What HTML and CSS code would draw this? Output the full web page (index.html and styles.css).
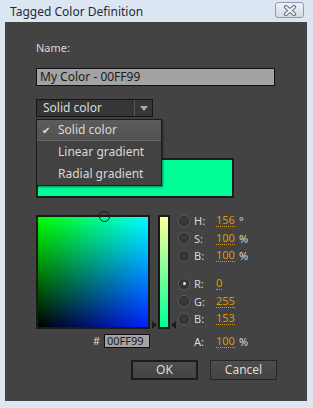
FILE: index.html
```html
<!DOCTYPE html>
<html lang="en">
<head>
    <meta charset="UTF-8">
    <title>Tagged Color Definition</title>
    <link rel="stylesheet" href="styles.css">
</head>
<body>
<div class="titlebar">
    <span class="title">Tagged Color Definition</span>
    <span class="close">
        <svg width="14" height="11" viewBox="0 0 14 11">
            <path d="M3 2 L11 9 M11 2 L3 9" stroke="#6b7380" stroke-width="4.2" stroke-linecap="round"/>
            <path d="M3 2 L11 9 M11 2 L3 9" stroke="#f4f6f8" stroke-width="2" stroke-linecap="round"/>
        </svg>
    </span>
</div>
<div class="dialog">
    <div class="label">Name:</div>
    <div class="nameInput">My Color - 00FF99</div>

    <div class="typeBox">
        <div class="select">
            <span class="selectText">Solid color</span>
            <span class="selectArrow"></span>
        </div>
        <div class="menu">
            <div class="menuItem active"><span class="check">&#10004;</span>Solid color</div>
            <div class="menuItem">Linear gradient</div>
            <div class="menuItem">Radial gradient</div>
        </div>
    </div>

    <div class="swatch"></div>

    <div class="picker">
        <div class="fieldCol">
            <div class="field">
                <span class="marker"></span>
            </div>
            <div class="hexRow">
                <span class="hash">#</span>
                <span class="hexInput">00FF99</span>
            </div>
        </div>
        <div class="sliderCol">
            <span class="tri left"></span>
            <div class="slider"></div>
            <span class="tri right"></span>
        </div>
        <div class="values">
            <div class="row"><span class="radio"></span><span class="name">H:</span><span class="val">156</span><span class="unit">&deg;</span></div>
            <div class="row"><span class="radio"></span><span class="name">S:</span><span class="val">100</span><span class="unit">%</span></div>
            <div class="row"><span class="radio"></span><span class="name">B:</span><span class="val">100</span><span class="unit">%</span></div>
            <div class="row gap"><span class="radio on"></span><span class="name">R:</span><span class="val">0</span></div>
            <div class="row"><span class="radio"></span><span class="name">G:</span><span class="val">255</span></div>
            <div class="row"><span class="radio"></span><span class="name">B:</span><span class="val">153</span></div>
            <div class="row alpha"><span class="noradio"></span><span class="name">A:</span><span class="val">100</span><span class="unit">%</span></div>
        </div>
    </div>

    <div class="buttons">
        <button class="btn default">OK</button>
        <button class="btn">Cancel</button>
    </div>
</div>
</body>
</html>
```

FILE: styles.css
```css
body {
    margin: 0;
    background: #dbe6f2;
    font-family: "Noto Sans", "DejaVu Sans", sans-serif;
    font-size: 12px;
}
.titlebar {
    height: 22px;
    display: flex;
    align-items: center;
    justify-content: space-between;
}
.title {
    padding-left: 10px;
    color: #1e2a38;
    font-size: 12px;
}
.close {
    width: 27px;
    height: 14px;
    margin-right: 9px;
    margin-top: -2px;
    border: 1px solid #8e9bb0;
    border-radius: 3px;
    background: linear-gradient(#eef3f9, #d2dbe7);
    display: flex;
    align-items: center;
    justify-content: center;
}
.dialog {
    margin-left: 5px;
    width: 302px;
    height: 379px;
    background: #434343;
    padding-left: 31px;
    box-sizing: border-box;
    color: #d8d8d8;
}
.label {
    padding-top: 18px;
    font-size: 11px;
    height: 14px;
}
.nameInput {
    margin-top: 14px;
    width: 239px;
    height: 18px;
    box-sizing: border-box;
    background: #a3a3a3;
    border: 1px solid #111;
    color: #1a1a1a;
    font-size: 12px;
    line-height: 16px;
    padding-left: 3px;
}
.typeBox {
    position: relative;
    margin-top: 13px;
    height: 18px;
}
.select {
    width: 117px;
    height: 18px;
    box-sizing: border-box;
    background: #363636;
    border: 1px solid #151515;
    display: flex;
}
.selectText {
    flex: 1;
    padding-left: 6px;
    line-height: 16px;
    color: #dcdcdc;
}
.selectArrow {
    width: 17px;
    border-left: 1px solid #555;
    position: relative;
}
.selectArrow::after {
    content: "";
    position: absolute;
    left: 5px;
    top: 6px;
    border-left: 4px solid transparent;
    border-right: 4px solid transparent;
    border-top: 5px solid #aaa;
}
.menu {
    position: absolute;
    left: 0;
    top: 20px;
    width: 126px;
    height: 67px;
    box-sizing: border-box;
    background: #424242;
    border: 1px solid #1c1c1c;
    box-shadow: 1px 1px 2px rgba(0, 0, 0, 0.5);
    z-index: 2;
}
.menuItem {
    height: 22px;
    line-height: 21px;
    padding-left: 21px;
    color: #d8d8d8;
    font-size: 12px;
    position: relative;
}
.menuItem.active {
    background: linear-gradient(#5c5c5c, #525252);
    border-bottom: 1px solid #666;
    height: 20px;
    line-height: 20px;
}
.check {
    position: absolute;
    left: 5px;
    font-size: 10px;
    color: #e0e0e0;
}
.swatch {
    margin-top: 41px;
    width: 198px;
    height: 40px;
    box-sizing: border-box;
    background: #00ff99;
    border: 2px solid #1c1c1c;
}
.picker {
    display: flex;
    margin-top: 17px;
}
.fieldCol {
    width: 114px;
}
.field {
    position: relative;
    width: 114px;
    height: 114px;
    box-sizing: border-box;
    border: 2px solid #1a1a1a;
    background: linear-gradient(to right, #000, #0020ff), linear-gradient(to top, #000, #00ff00);
    background-blend-mode: screen;
}
.marker {
    position: absolute;
    left: 61px;
    top: -6px;
    width: 9px;
    height: 9px;
    border: 1px solid #1c1c1c;
    border-radius: 50%;
}
.hexRow {
    display: flex;
    justify-content: flex-end;
    align-items: center;
    margin-top: 4px;
}
.hash {
    margin-right: 4px;
    font-size: 11px;
}
.hexInput {
    width: 46px;
    height: 14px;
    box-sizing: border-box;
    background: #a3a3a3;
    border: 1px solid #111;
    color: #1a1a1a;
    font-size: 11px;
    line-height: 12px;
    padding-left: 2px;
}
.sliderCol {
    position: relative;
    margin-left: 8px;
    width: 12px;
    height: 114px;
}
.slider {
    width: 12px;
    height: 114px;
    box-sizing: border-box;
    border: 2px solid #1a1a1a;
    background: linear-gradient(#ffff99, #00ff99);
}
.tri {
    position: absolute;
    bottom: 0;
    border-top: 4px solid transparent;
    border-bottom: 4px solid transparent;
}
.tri.left {
    left: -6px;
    border-left: 5px solid #1a1a1a;
}
.tri.right {
    right: -6px;
    border-right: 5px solid #1a1a1a;
}
.values {
    margin-left: 8px;
    margin-top: -3px;
}
.row {
    display: flex;
    align-items: center;
    height: 17.5px;
}
.row.gap {
    margin-top: 10.5px;
}
.row.alpha {
    margin-top: 5.5px;
}
.radio, .noradio {
    width: 12px;
    height: 12px;
    box-sizing: border-box;
    border-radius: 50%;
    margin-right: 4px;
    position: relative;
}
.radio {
    background: radial-gradient(circle at 50% 45%, #3c3c3c, #303030);
    border: 1px solid #5a5a5a;
    box-shadow: inset 0 0 0 1px #2a2a2a;
}
.radio.on::after {
    content: "";
    position: absolute;
    left: 3.5px;
    top: 3.5px;
    width: 3px;
    height: 3px;
    border-radius: 50%;
    background: #eee;
}
.name {
    width: 22px;
    font-size: 11px;
}
.val {
    color: #d89a08;
    font-size: 11px;
    border-bottom: 1px dotted #d89a08;
    line-height: 12px;
}
.unit {
    margin-left: 4px;
    font-size: 11px;
}
.buttons {
    display: flex;
    gap: 12px;
    margin-top: 9px;
    margin-left: 95px;
}
.btn {
    width: 67px;
    height: 20px;
    box-sizing: border-box;
    background: linear-gradient(#4d4d4d, #434343);
    border: 1px solid #262626;
    color: #dcdcdc;
    font-family: "Noto Sans", "DejaVu Sans", sans-serif;
    font-size: 12px;
    padding: 0;
    line-height: 16px;
}
.btn.default {
    border: 2px solid #1c1c1c;
}
```
